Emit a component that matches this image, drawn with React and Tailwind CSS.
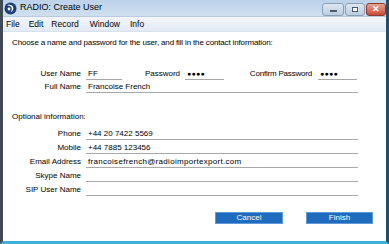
import React from "react";

function Field({ w, children, dots }) {
  return (
    <div
      className={`h-[12px] border-b border-[#a8a8a8] pl-[2px] flex items-end leading-[10px] ${dots ? "text-[7px] tracking-[0.3px]" : ""}`}
      style={{ width: w }}
    >
      {children}
    </div>
  );
}

function Row({ label, children }) {
  return (
    <div className="flex items-center h-[14px]">
      <div className="w-[78px] text-right pr-0">{label}</div>
      <div className="ml-[5px] flex items-center">{children}</div>
    </div>
  );
}

export default function App() {
  return (
    <div
      className="w-[389px] h-[244px] flex flex-col overflow-hidden text-[8px] text-black border-l-[3px] border-l-[#3f4a55] border-r-[3px] border-r-[#20506f] border-b-[3px] border-b-[#3bb3d8] bg-white"
      style={{ fontFamily: '"Liberation Sans", Arial, sans-serif' }}
    >
      {/* Title bar */}
      <div className="h-[17px] flex items-center bg-gradient-to-b from-[#bcd2ea] to-[#cfdfef] border-b border-[#b9cbdd]">
        <svg width="13" height="13" viewBox="0 0 13 13" className="ml-[1px]">
          <circle cx="6.5" cy="6.5" r="6" fill="#1d3f7a" />
          <path d="M3 3.5 C 7 3, 9.5 6, 6.5 10.5 C 11 8, 10 3, 5 2.5 Z" fill="#ffffff" />
          <circle cx="5" cy="7" r="1.4" fill="#ffffff" />
        </svg>
        <span className="ml-[3px] text-[9px] text-black">RADIO: Create User</span>
        <div className="ml-auto flex items-start h-full pt-[3px] gap-[1px] pr-[0px]">
          <div className="w-[22px] h-[13px] rounded-[3px] border border-[#8aa0b8] bg-gradient-to-b from-[#dde7f2] to-[#bccde0] flex items-center justify-center">
            <div className="w-[7px] h-[2px] bg-white border border-[#4a5a6a] mt-[3px]" />
          </div>
          <div className="w-[20px] h-[13px] rounded-[3px] border border-[#8aa0b8] bg-gradient-to-b from-[#dde7f2] to-[#bccde0] flex items-center justify-center">
            <div className="w-[6px] h-[5px] border border-[#4a5a6a] bg-white" />
          </div>
          <div className="w-[20px] h-[13px] rounded-[3px] border border-[#8a3a30] bg-gradient-to-b from-[#e8a293] to-[#c74a36] flex items-center justify-center text-white text-[9px] font-bold leading-none">
            ✕
          </div>
        </div>
      </div>
      {/* Menu bar */}
      <div className="h-[15px] flex items-center bg-gradient-to-b from-[#f3f6fb] to-[#e3ebf5] border-b border-[#d7e1ec] text-[8.5px]">
        <span className="ml-[3px]">File</span>
        <span className="ml-[9px]">Edit</span>
        <span className="ml-[8px]">Record</span>
        <span className="ml-[11px]">Window</span>
        <span className="ml-[10px]">Info</span>
      </div>
      {/* Content */}
      <div className="flex-1 flex flex-col">
        <div className="pl-[9px] mt-[6px] h-[10px] leading-[10px] tracking-[-0.15px]">
          Choose a name and password for the user, and fill in the contact information:
        </div>
        <div className="mt-[19px] flex items-center h-[13px]">
          <div className="w-[78px] text-right">User Name</div>
          <div className="ml-[5px]"><Field w={36}>FF</Field></div>
          <div className="w-[58px] text-right">Password</div>
          <div className="ml-[5px]"><Field w={39} dots>●●●●</Field></div>
          <div className="w-[88px] text-right tracking-[-0.2px]">Confirm Password</div>
          <div className="ml-[6px]"><Field w={39} dots>●●●●</Field></div>
        </div>
        <div className="flex items-center h-[13px]">
          <div className="w-[78px] text-right">Full Name</div>
          <div className="ml-[5px]"><Field w={272}>Francoise French</Field></div>
        </div>
        <div className="pl-[9px] mt-[19px] h-[10px] leading-[10px]">Optional information:</div>
        <div className="mt-[5px] flex flex-col">
          <Row label="Phone"><Field w={272}>+44 20 7422 5569</Field></Row>
          <Row label="Mobile"><Field w={272}>+44 7885 123456</Field></Row>
          <Row label="Email Address"><Field w={272}><span className="tracking-[0.3px]">francoisefrench@radioimportexport.com</span></Field></Row>
          <Row label="Skype Name"><Field w={272}></Field></Row>
          <Row label="SIP User Name"><Field w={272}></Field></Row>
        </div>
        <div className="mt-[15px] flex justify-end pr-[13px] gap-[23px]">
          <button className="w-[68px] h-[12px] bg-[#1f6bbd] border border-[#5f9ad6] text-white text-[8px] leading-[10px]">Cancel</button>
          <button className="w-[67px] h-[12px] bg-[#1f6bbd] border border-[#5f9ad6] text-white text-[8px] leading-[10px]">Finish</button>
        </div>
      </div>
    </div>
  );
}
